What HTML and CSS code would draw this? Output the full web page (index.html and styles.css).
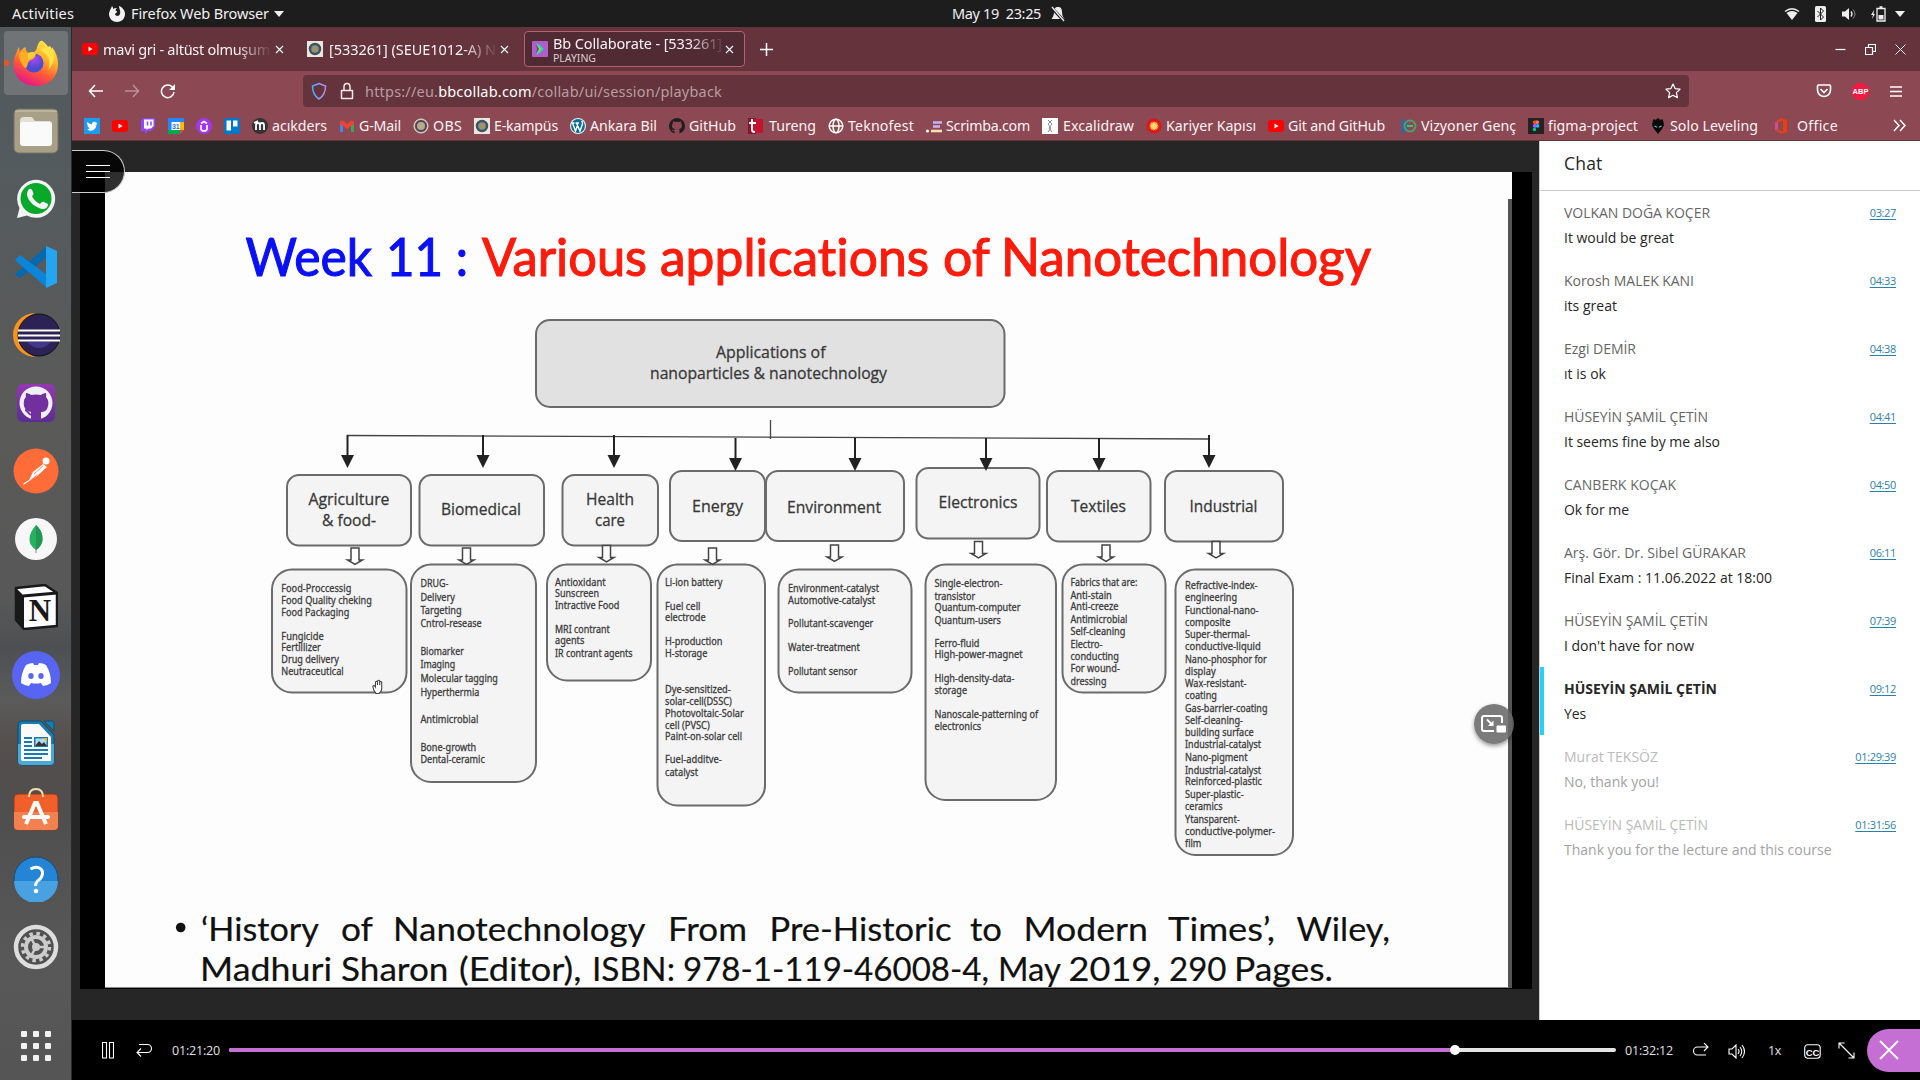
FILE: index.html
```html
<!DOCTYPE html>
<html lang="en">
<head>
<meta charset="utf-8">
<title>Bb Collaborate</title>
<link rel="stylesheet" href="styles.css">
</head>
<body>
<div class="desktop">
  <header class="topbar">
    <div class="topbar-left">
      <span class="activities" data-w="62">Activities</span>
      <svg class="app-glyph" width="16" height="18" viewBox="0 0 16 18"><path d="M3 1c1 1 1 2 1 3 1-1 3-1 4-1-1 1-2 2-1 3 1 0 1 0 1 1s-2 1-2 2c0 2 4 3 5 0 1-3-1-5-1-8 3 1 6 4 6 8 0 5-4 8-8 8s-8-3-8-8c0-3 2-5 3-8z" fill="#f2f2f2"/></svg>
      <span data-w="138">Firefox Web Browser</span>
      <i class="caret"></i>
    </div>
    <div class="clock">
      <span data-w="89">May 19&nbsp; 23:25</span>
      <svg width="14" height="16" viewBox="0 0 14 16"><path d="M7 1c3 0 4 2 4 5s1 5 2.500 7H.5C2 11 3 9 3 6s1-5 4-5z" fill="#eee"/><path d="M0 1l13 14" stroke="#1d1d1d" stroke-width="3"/><path d="M1 1l12 14" stroke="#eee" stroke-width="1.300"/></svg>
    </div>
    <div class="tray">
      <svg width="16" height="14" viewBox="0 0 16 14"><path d="M8 13L2.500 6q5.500-4 11 0z" fill="#eee"/><path d="M1 4.500Q8-1 15 4.500" fill="none" stroke="#eee" stroke-width="1.400"/></svg>
      <svg class="bt" width="12" height="16" viewBox="0 0 12 16"><rect width="11" height="16" rx="1.500" fill="#eee"/><path d="M2.500 5l6 6-3 3V2l3 3-6 6" fill="none" stroke="#1d1d1d"/></svg>
      <svg class="vol" width="16" height="14" viewBox="0 0 16 14"><path d="M1 4.500h3L8 1v12L4 9.500H1z" fill="#eee"/><path d="M10 4.500q2 2.500 0 5" fill="none" stroke="#eee" stroke-width="1.300"/><path d="M12 2.500q4 4.500 0 9" fill="none" stroke="#888"/></svg>
      <svg class="bat" width="15" height="16" viewBox="0 0 15 16"><path d="M3 4L0 9h2l-1 4 3-5H2.500z" fill="#eee"/><path d="M6 2.500h8v12.500H6zM8.500 1h3" fill="none" stroke="#eee" stroke-width="1.300"/><path d="M7.500 9h5v4.500h-5z" fill="#eee"/></svg>
      <i class="caret"></i>
    </div>
  </header>

  <div class="workspace">
    <nav class="dock">
      <div class="dock-item active">
        <svg width="48" height="60" viewBox="0 0 48 60"><defs>
          <linearGradient id="fx" x1=".8" y1="0" x2=".3" y2="1"><stop offset="0" stop-color="#fff44f"/><stop offset=".35" stop-color="#ffb52a"/><stop offset=".65" stop-color="#ff5a36"/><stop offset="1" stop-color="#e3128d"/></linearGradient>
          <radialGradient id="fg" cx=".5" cy=".3"><stop offset="0" stop-color="#b245f0"/><stop offset="1" stop-color="#4a4ccf"/></radialGradient></defs>
          <path d="M29 7c5 3 8 7 9 11 2-1 2-3 2-4 4 5 6 11 6 17 0 13-9 22-22 22S1.500 44 1.500 31c0-7 3-11 5-17 1 2 1 3 1 5 3-3 4-4 6-5 0 3 1 5 3 6 4 0 7-1 8-4 1-4 2-7 5-9z" fill="url(#fx)"/>
          <circle cx="22" cy="30" r="9.500" fill="url(#fg)"/><path d="M7 21c4-4 8-1 12 0 4 0 5 1 4 3-2 3-6 3-7 6-1 3-1 5-3 5-3-3-6-8-6-14z" fill="#ffad24"/><path d="M16 20c4-2 7-1 8 1-1 3-6 4-8 6z" fill="#ffcf3a"/><path d="M28 17c8 3 12 11 8 20 7-7 8-16 2-24z" fill="#ffe247"/></svg>
        <i class="run-dot"></i>
      </div>
      <div class="dock-item"><svg width="46" height="46" viewBox="0 0 46 46"><rect x="1" y="1" width="44" height="44" rx="5" fill="#a79f86" stroke="#797362"/><path d="M2 3h42" stroke="#cfc8b4"/><path d="M7 13q0-4 4-4h7q2 0 3 3l1 1h14q3 0 3 3v6H7z" fill="#e3e0d6"/><rect x="7" y="14" width="32" height="24" rx="3" fill="#fafafa"/></svg></div>
      <div class="dock-item"><svg width="40" height="40" viewBox="0 0 40 40"><path d="M1 39l2.500-10A19 19 0 1 1 11 36.500z" fill="#f4f4f4"/><circle cx="20" cy="19.500" r="15.500" fill="#08a82b"/><path d="M13 10c2-1 3 0 4 3s0 3-1 4c2 4 4 6 8 8 1-1 2-3 4-2l4 2c0 5-5 6-9 4-7-3-11-8-12-13 0-3 1-5 2-6z" fill="#f4f4f4"/></svg></div>
      <div class="dock-item"><svg width="44" height="44" viewBox="0 0 44 44"><path d="M1 29l5 4L33 12V1z" fill="#0469ad"/><path d="M1 15l5-5 27 20v13z" fill="#0b85d8"/><path d="M32 1l11 5v32l-11 5z" fill="#25a5f0"/></svg></div>
      <div class="dock-item"><svg width="48" height="44" viewBox="0 0 48 44"><path d="M23 0A22 22 0 0 0 23 44a24 24 0 0 1 0-44z" fill="#f7941e"/><circle cx="27" cy="22" r="21" fill="#2c2255" stroke="#111"/><path d="M15 29q12 12 24 0z" fill="#43368e"/><path d="M6 17.500h42M6 22.500h42M6 27.500h42" stroke="#fff" stroke-width="2.200"/></svg></div>
      <div class="dock-item"><svg width="40" height="40" viewBox="0 0 40 40"><defs><linearGradient id="gh" x2="0" y2="1"><stop stop-color="#9636b5"/><stop offset="1" stop-color="#5b2d91"/></linearGradient></defs><rect x="1" y="1" width="38" height="38" rx="6" fill="url(#gh)"/><circle cx="20" cy="20" r="16.500" fill="#eef0f5"/><path d="M15 37v-8c-6-1-8-6-7-11 0-2 1-3 2-4-.500-2 0-4 0-4 2 0 4 1 5 2q5-1 10 0c1-1 3-2 5-2 0 0 .500 2 0 4 3 3 3 8 1 12-1 2-3 3-6 3v8z" fill="#71309d"/><path d="M9 27c3 0 3 5 7 5" fill="none" stroke="#71309d" stroke-width="2"/></svg></div>
      <div class="dock-item"><svg width="46" height="46" viewBox="0 0 46 46"><circle cx="23" cy="23" r="22.500" fill="#ff6c37"/><circle cx="33" cy="13" r="3.500" fill="#fff"/><path d="M30 16l4 3-12 11 3-4-10 8-5 3 1-2 5-3 4-8-2 1z" fill="#fff"/><path d="M19 24l9-7M21 26l9-8" stroke="#ff6c37" stroke-width=".8"/></svg></div>
      <div class="dock-item"><svg width="42" height="42" viewBox="0 0 42 42"><circle cx="21" cy="21" r="21" fill="#f7f7f7"/><path d="M21 7c5 5 6.500 9 6.500 14S24 30 21 32c-4-3-6.500-6-6.500-11S17 12 21 7z" fill="#27b060"/><path d="M21 7c5 5 6.500 9 6.500 14S24 30 21 32z" fill="#219650"/><path d="M21 31v4" stroke="#888"/></svg></div>
      <div class="dock-item"><svg width="44" height="46" viewBox="0 0 44 46"><path d="M2 4l29-3 12 8v33l-33 3-8-9z" fill="#fff" stroke="#191919" stroke-width="2.500" stroke-linejoin="round"/><path d="M2 4l8 8v33l-8-9z" fill="#191919"/><path d="M9 12l34-3" stroke="#191919" stroke-width="3"/><text x="26" y="37" text-anchor="middle" class="serif-n">N</text></svg></div>
      <div class="dock-item"><svg width="48" height="48" viewBox="0 0 48 48"><circle cx="24" cy="24" r="24" fill="#5865f2"/><path d="M14 14q4-2 7-2l1 2h4l1-2q4 0 7 2 5 8 5 18-4 3-8 3l-2-3q-5 1-10 0l-2 3q-4 0-8-3 0-10 5-18z" fill="#fff"/><ellipse cx="19" cy="25" rx="2.700" ry="3" fill="#5865f2"/><ellipse cx="29" cy="25" rx="2.700" ry="3" fill="#5865f2"/></svg></div>
      <div class="dock-item"><svg width="38" height="46" viewBox="0 0 38 46"><path d="M5 1h19l13 14v26q0 4-4 4H5q-4 0-4-4V5q0-4 4-4z" fill="#1a7bb0" stroke="#0e4f74"/><path d="M1 24h36v17q0 4-4 4H5q-4 0-4-4z" fill="#4aa9d6"/><path d="M6 4h16l12 13v24H6q-2 0-2-2V6q0-2 2-2z" fill="#fafafa"/><path d="M27 1h8q2 0 2 2v8z" fill="#1a7bb0" stroke="#0e4f74"/><path d="M7 18h8M7 22h8M7 26h8M7 30h24M7 34h24M7 38h18" stroke="#1a7bb0" stroke-width="2"/><rect x="17" y="17" width="14" height="10" fill="#1a7bb0"/><rect x="18.500" y="18.500" width="11" height="7" fill="#aedcf3"/><path d="M18 26l4-5 3 3 2-2 3 4z" fill="#333"/><path d="M26 18h4v4z" fill="#f7b32b"/></svg></div>
      <div class="dock-item"><svg class="lift" width="46" height="44" viewBox="0 0 46 44"><rect x="1" y="7" width="44" height="36" rx="4" fill="#f1602a" stroke="#8f3a1b"/><path d="M1 25h44v14q0 4-4 4H5q-4 0-4-4z" fill="#f2814f"/><path d="M16 10q0-8 7-8t7 8" fill="none" stroke="#f8dca8" stroke-width="2"/><path d="M13 37l9-21h2l9 21" fill="none" stroke="#fff" stroke-width="4"/><path d="M11 30h24" stroke="#fff" stroke-width="4" stroke-linecap="round"/></svg></div>
      <div class="dock-item"><svg width="46" height="46" viewBox="0 0 46 46"><circle cx="23" cy="23" r="22" fill="#2484d6" stroke="#1d4c76"/><path d="M1 25h44a22 22 0 0 1-44 0z" fill="#48a2e2"/><path d="M17.500 13q5-3 9-1 5 3 2 9-1 2-4 4-2 2-2 5" fill="none" stroke="#fff" stroke-width="3"/><circle cx="23" cy="35" r="2.300" fill="#fff"/></svg></div>
      <div class="dock-item"><svg width="46" height="46" viewBox="0 0 46 46"><circle cx="23" cy="23" r="20" fill="#515151" stroke="#dedede" stroke-width="4.500"/><circle cx="23" cy="23" r="13.500" fill="none" stroke="#ccc" stroke-width="3.500" stroke-dasharray="3.500 3.568"/><circle cx="23" cy="23" r="10" fill="none" stroke="#ccc" stroke-width="4"/><circle cx="23" cy="23" r="4" fill="#ccc"/><path d="M23 23l-5-9M23 23l-5 9M23 23h10" stroke="#ccc" stroke-width="2.500"/></svg></div>
      <div class="dock-apps"><i></i><i></i><i></i><i></i><i></i><i></i><i></i><i></i><i></i></div>
    </nav>

    <main class="browser">
      <div class="tabs">
        <div class="tab tab-one"><svg width="16" height="12" viewBox="0 0 16 12"><rect width="16" height="12" rx="2.500" fill="#f00"/><path d="M6.500 3.500l4 2.500-4 2.500z" fill="#fff"/></svg>
          <span class="tab-title fade" data-w="167">mavi gri - altüst olmuşum</span><svg class="x" width="9" height="9" viewBox="0 0 9 9"><path d="M1 1l7 7M8 1L1 8"/></svg></div>
        <div class="tab tab-two"><svg width="16" height="16" viewBox="0 0 16 16"><path d="M0 0h16v16H0z" fill="#eee8dc"/><circle cx="8" cy="8" r="5" fill="#9c9270" stroke="#38536b" stroke-width="2.500"/></svg>
          <span class="tab-title fade" data-w="167">[533261] (SEUE1012-A) N</span><svg class="x" width="9" height="9" viewBox="0 0 9 9"><path d="M1 1l7 7M8 1L1 8"/></svg></div>
        <div class="tab tab-active"><svg width="16" height="16" viewBox="0 0 16 16"><rect width="16" height="16" rx="1" fill="#b25cc9"/><path d="M4 2l4 2 4 4-4 4-4 2 3-6z" fill="#1fd3c4"/><path d="M4 3l6 5-6 5 3-5z" fill="#8be02f"/><path d="M4 3l3 5-3 5 1-5z" fill="#6b3db0"/></svg>
          <div class="tab-two-lines"><span class="fade" data-w="169">Bb Collaborate - [533261]</span><small data-w="43">PLAYING</small></div><svg class="x" width="9" height="9" viewBox="0 0 9 9"><path d="M1 1l7 7M8 1L1 8"/></svg></div>
        <svg class="new-tab" width="13" height="13" viewBox="0 0 13 13"><path d="M6.500 0v13M0 6.500h13"/></svg>
        <div class="win-buttons">
          <svg width="11" height="11" viewBox="0 0 11 11"><path d="M.5 5.500h10"/></svg>
          <svg width="11" height="11" viewBox="0 0 11 11"><path d="M.5 3.500h7v7h-7zM3.500 3V.5h7v7H8"/></svg>
          <svg width="11" height="11" viewBox="0 0 11 11"><path d="M.5.5l10 10M10.500.5l-10 10" stroke-width=".9"/></svg>
        </div>
      </div>

      <div class="toolbar">
        <div class="nav-buttons">
          <svg width="16" height="16" viewBox="0 0 16 16"><path d="M15 8H1.500M7 2L1.500 8 7 14"/></svg>
          <svg class="dim" width="16" height="16" viewBox="0 0 16 16"><path d="M1 8h13.500M9 2l5.500 6L9 14"/></svg>
          <svg width="16" height="16" viewBox="0 0 16 16"><path d="M14 9A6.300 6.300 0 1 1 12.500 4.200L14.500 6"/><path d="M15 1v6H9z" fill="#fff" stroke="none"/></svg>
        </div>
        <div class="urlbar">
          <svg width="16" height="18" viewBox="0 0 16 18"><defs><linearGradient id="sh" x2="1" y2="0"><stop stop-color="#3fb4ff"/><stop offset="1" stop-color="#b98cf0"/></linearGradient></defs><path d="M8 1.500L14.500 4q0 9-6.500 13Q1.500 13 1.500 4z" fill="none" stroke="url(#sh)" stroke-width="1.500"/></svg>
          <svg width="14" height="18" viewBox="0 0 14 18"><path d="M1.500 8.500h11v8h-11zM4 8V5a3 3.500 0 0 1 6 0v3" fill="none" stroke="#f2e9ea" stroke-width="1.500" stroke-linejoin="round"/></svg>
          <span class="url" data-w="357">https://eu.<b>bbcollab.com</b>/collab/ui/session/playback</span>
          <svg class="star" width="16" height="16" viewBox="0 0 16 16"><path d="M8 1l2.100 4.600 4.900.6-3.600 3.400 1 5L8 12.200 3.600 14.600l1-5L1 6.200l4.900-.6z" fill="none" stroke="#fff" stroke-width="1.200" stroke-linejoin="round"/></svg>
        </div>
        <div class="toolbar-right">
          <svg width="16" height="14" viewBox="0 0 16 14"><path d="M2.500 1h11q1 0 1 1v4a6.500 6.500 0 0 1-13 0V2q0-1 1-1zM4.500 5L8 8.500 11.500 5"/></svg>
          <svg width="17" height="17" viewBox="0 0 17 17"><path d="M5 0h7l5 5v7l-5 5H5l-5-5V5z" fill="#f01b45" stroke="none"/><text x="8.500" y="11.400" text-anchor="middle" class="abp">ABP</text></svg>
          <svg class="burger" width="12" height="11" viewBox="0 0 12 11"><path d="M0 1h12M0 5.500h12M0 10h12"/></svg>
        </div>
      </div>

      <div class="bookmarks">
        <a><svg width="16" height="16" viewBox="0 0 16 16"><path d="M0 0h16v16H0z" fill="#1d9bf0"/><path d="M3 11.500c5 3 9.500 0 9.500-5.500l1-1.300-1.300.1c-1.500-2-4.500-1-4.200 1.400C6 6 4.500 5.200 3.500 4c-1 2 0 3 1 3.800l-1-.3c0 1.300 1 2.200 2 2.400-.5 1-1.500 1.500-2.500 1.600z" fill="#fff"/></svg></a>
        <a><svg width="16" height="16" viewBox="0 0 16 16"><rect y="2" width="16" height="12" rx="3" fill="#f00"/><path d="M6.500 5.500l4 2.500-4 2.500z" fill="#fff"/></svg></a>
        <a><svg width="16" height="16" viewBox="0 0 16 16"><path d="M3 0h12v9l-4 4H8l-3 3v-3H1V3z" fill="#9146ff"/><path d="M4 1.500h9.500V8l-2.500 2.500H8.500L6.500 12v-1.500H4z" fill="#fff"/><path d="M7.500 3.500v4M11 3.500v4" stroke="#9146ff" stroke-width="1.500"/></svg></a>
        <a><svg width="16" height="16" viewBox="0 0 16 16"><path d="M0 1q0-1 1-1h14q1 0 1 1v11l-4 4H1q-1 0-1-1z" fill="#2684fc"/><path d="M12 4h4v8h-4z" fill="#ffba00"/><path d="M0 12h12v4H1q-1 0-1-1z" fill="#00ac47"/><path d="M12 12h4l-4 4z" fill="#ea4335"/><path d="M3.500 4H12v8H3.500z" fill="#fff"/><text x="7.800" y="11" text-anchor="middle" class="cal">31</text></svg></a>
        <a><svg width="16" height="16" viewBox="0 0 16 16"><circle cx="8" cy="8" r="8" fill="#a435f0"/><path d="M5 7v3.500q0 2.500 3 2.500t3-2.500V7M5 5.500L8 3.500l3 2" fill="none" stroke="#fff" stroke-width="1.700"/></svg></a>
        <a><svg width="16" height="16" viewBox="0 0 16 16"><rect width="16" height="16" rx="2" fill="#0079c8"/><path d="M2.500 2.500h4.500v10H2.500zM9 2.500h4.500v6H9z" fill="#fff"/></svg></a>
        <a><svg width="16" height="16" viewBox="0 0 16 16"><circle cx="8" cy="8" r="8" fill="#333"/><path d="M4 12V7q0-2 2-2t2 2v5M8 7q0-2 2-2t2 2v5M2 5l4-2" fill="none" stroke="#fff" stroke-width="1.800"/></svg><span data-w="55">acıkders</span></a>
        <a><svg width="16" height="16" viewBox="0 0 16 16"><path d="M1 14V4h3v10z" fill="#4285f4"/><path d="M12 14V4h3v10z" fill="#34a853"/><path d="M1 3l3-.5L8 6l4-3.500 3 .5v3l-7 5-7-5z" fill="#ea4335"/></svg><span data-w="42">G-Mail</span></a>
        <a><svg width="16" height="16" viewBox="0 0 16 16"><circle cx="8" cy="8" r="7" fill="#b9a987" stroke="#e5dccb"/><circle cx="8" cy="8" r="5" fill="none" stroke="#4d4463" stroke-width="2"/></svg><span data-w="29">OBS</span></a>
        <a><svg width="16" height="16" viewBox="0 0 16 16"><path d="M0 0h16v16H0z" fill="#eee8dc"/><circle cx="8" cy="8" r="5" fill="#9c9270" stroke="#38536b" stroke-width="2.500"/></svg><span data-w="64">E-kampüs</span></a>
        <a><svg width="16" height="16" viewBox="0 0 16 16"><circle cx="8" cy="8" r="8" fill="#e8f2f7"/><circle cx="8" cy="8" r="6.900" fill="#0d6c96"/><path d="M2.500 5l3 8 2.300-6.500M6.500 5l3.500 8 2.500-7q.3-2-1-3M1.500 5h3M5.500 5h3.500" fill="none" stroke="#fff" stroke-width="1.400"/></svg><span data-w="67">Ankara Bil</span></a>
        <a><svg width="16" height="16" viewBox="0 0 16 16"><path d="M8 0a8 8 0 0 0-2.500 15.600V13c-2 .5-2.600-1-3-1.700 1.200-.3 1.400 1.500 3 .8l.4-1C3.500 10.700 3 9 3 7.500q0-1.500 1-2.300-.3-1 .1-2 1 0 2 .8 2-.5 4 0 1-.8 2-.8.4 1 .1 2 .8.900.800 2.300c0 2-1 3.300-3 3.600q.5.500.5 1.500v3A8 8 0 0 0 8 0z" fill="#221d22"/></svg><span data-w="47">GitHub</span></a>
        <a><svg width="16" height="16" viewBox="0 0 16 16"><path d="M0 0h8v16H0z" fill="#8f1228"/><path d="M6 1h9v14H4z" fill="#c4122f"/><path d="M4 1v11q0 2 3 2M1 5h7" fill="none" stroke="#fff" stroke-width="2"/></svg><span data-w="47" class="pad1">Tureng</span></a>
        <a><svg width="16" height="16" viewBox="0 0 16 16"><g fill="none" stroke="#fff" stroke-width="1.500"><circle cx="8" cy="8" r="6.800"/><ellipse cx="8" cy="8" rx="3" ry="6.800"/><path d="M1 8h14"/></g></svg><span data-w="66">Teknofest</span></a>
        <a><svg width="16" height="16" viewBox="0 0 16 16"><path d="M7 4.500h9M7 8.500h7" stroke="#c5b5f5" stroke-width="2.600"/><path d="M5 13h11" stroke="#f7dfae" stroke-width="2.600"/><circle cx="1.500" cy="13" r="1.500" fill="#fff"/></svg><span data-w="84">Scrimba.com</span></a>
        <a><svg width="16" height="16" viewBox="0 0 16 16"><path d="M0 0h16v16H0z" fill="#fff"/><path d="M6 2l4 4-3 4 3 4M10 2L6 6l3 4-3 4" fill="none" stroke="#888"/></svg><span data-w="71" class="pad1">Excalidraw</span></a>
        <a><svg width="16" height="16" viewBox="0 0 16 16"><circle cx="8" cy="8" r="7.500" fill="#e0131b"/><circle cx="8" cy="8" r="4" fill="#f8d36b" stroke="#d66a20" stroke-dasharray="1 1" stroke-width="2"/></svg><span data-w="90">Kariyer Kapısı</span></a>
        <a><svg width="16" height="16" viewBox="0 0 16 16"><rect y="2" width="16" height="12" rx="3" fill="#f00"/><path d="M6.500 5.500l4 2.500-4 2.500z" fill="#fff"/></svg><span data-w="97" class="wide">Git and GitHub</span></a>
        <a><svg width="16" height="16" viewBox="0 0 16 16"><path d="M1.500 2.500v11L8 8z" fill="none" stroke="#1d6fb5" stroke-width="2"/><circle cx="9" cy="8" r="5.500" fill="none" stroke="#4f9f6b" stroke-width="2"/><path d="M6 8h6" stroke="#58b85c" stroke-width="2"/></svg><span data-w="95">Vizyoner Genç</span></a>
        <a><svg width="16" height="16" viewBox="0 0 16 16"><path d="M0 0h16v16H0z" fill="#232323"/><path d="M8 2.500H6.500a1.800 1.800 0 0 0 0 3.600H8z" fill="#f24e1e"/><path d="M8 2.500h1.500a1.800 1.800 0 0 1 0 3.600H8z" fill="#ff7262"/><path d="M8 6.100H6.500a1.800 1.800 0 0 0 0 3.600H8z" fill="#a259ff"/><circle cx="9.600" cy="7.900" r="1.800" fill="#1abcfe"/><circle cx="6.500" cy="11.500" r="1.700" fill="#0acf83"/></svg><span data-w="90">figma-project</span></a>
        <a><svg width="16" height="16" viewBox="0 0 16 16"><path d="M3 2l1-1 1.500 1L8 0l2.500 2L12 1l1 1 1 5-2 4-4 5-4-5-2-4z" fill="#090909"/><path d="M4.500 8l2.500 1.200M11.500 8L9 9.200" stroke="#4cc" stroke-width="1.200"/></svg><span data-w="88" class="solo">Solo Leveling</span></a>
        <a><svg width="16" height="16" viewBox="0 0 16 16"><path d="M2 4l6-4v3L5 5v6l3 2v3l-6-4z" fill="#d1453b"/><path d="M2 4l3 1v6l-3 1z" fill="#d84a8a"/><path d="M8 0l6 2v12l-6 2v-3h2V3H8z" fill="#ea3e0b"/></svg><span data-w="41" class="office">Office</span></a>
        <svg class="overflow" width="13" height="13" viewBox="0 0 13 13"><path d="M1 1l5 5.500L1 12M7 1l5 5.500L7 12"/></svg>
      </div>

      <div class="content">
        <section class="stage">
          <div class="video">
            <svg id="slide" class="slide" width="1407" height="816" viewBox="105 172 1407 816">
              <path d="M347 435.500L1209 439" class="bus"/>
              <path d="M770.500 420v19" class="bus"/>
              <path d="M1508 199h4v789h-4z" fill="#555"/>
              <path d="M105 987.500h1404" stroke="#888"/>
              <circle cx="180.700" cy="927.500" r="4.800" fill="#111"/>
              <g transform="translate(370.500 679)" fill="#fff" stroke="#444" stroke-width="1.100"><path d="M5 6V3q1.200-1.500 2 0V2q1.300-1.500 2.200 0v1q1.300-1 2 .3V9q0 4-3 5.500H5.500Q3 12 2.300 7.500 3.500 5.500 5 8zM7 3v3M9.200 3v3"/></g>
            </svg>
          </div>
          <div class="menu-tab"><i></i><i></i><i></i></div>
          <div class="pip"><svg width="26" height="18" viewBox="0 0 26 18"><path d="M13 16H3q-2 0-2-2V3q0-2 2-2h16q2 0 2 2v5" fill="none" stroke="#fff" stroke-width="2"/><path d="M6 4.500l5 5" stroke="#fff" stroke-width="1.800"/><path d="M12.500 5.500v5.500H7z" fill="#fff"/><rect x="15.500" y="10.500" width="9.500" height="7" rx="1" fill="#fff"/></svg></div>
        </section>
        <aside class="chat">
          <h2><span data-w="38.500">Chat</span></h2>
          <ul>
            <li><div><span data-w="146">VOLKAN DOĞA KOÇER</span><a>03:27</a></div><p data-w="110">It would be great</p></li>
            <li><div><span data-w="130">Korosh MALEK KANI</span><a>04:33</a></div><p data-w="53">its great</p></li>
            <li><div><span data-w="72">Ezgi DEMİR</span><a>04:38</a></div><p data-w="42">ıt is ok</p></li>
            <li><div><span data-w="144">HÜSEYİN ŞAMİL ÇETİN</span><a>04:41</a></div><p data-w="156">It seems fine by me also</p></li>
            <li><div><span data-w="112">CANBERK KOÇAK</span><a>04:50</a></div><p data-w="65">Ok for me</p></li>
            <li><div><span data-w="182">Arş. Gör. Dr. Sibel GÜRAKAR</span><a>06:11</a></div><p data-w="208">Final Exam : 11.06.2022 at 18:00</p></li>
            <li><div><span data-w="144">HÜSEYİN ŞAMİL ÇETİN</span><a>07:39</a></div><p data-w="130">I don't have for now</p></li>
            <li class="current"><div><span data-w="153">HÜSEYİN ŞAMİL ÇETİN</span><a>09:12</a></div><p data-w="22">Yes</p></li>
            <li class="later"><div><span data-w="94">Murat TEKSÖZ</span><a>01:29:39</a></div><p data-w="95">No, thank you!</p></li>
            <li class="later"><div><span data-w="144">HÜSEYİN ŞAMİL ÇETİN</span><a>01:31:56</a></div><p data-w="267.500">Thank you for the lecture and this course</p></li>
          </ul>
        </aside>
      </div>

      <footer class="player">
        <svg class="pause" width="12" height="17" viewBox="0 0 12 17"><path d="M.5.5h4v15.500h-4zM7.500.5h4v15.500h-4z"/></svg>
        <svg class="rewind" width="17" height="14" viewBox="0 0 17 14"><path d="M3 1.500h8.500a4 4 0 0 1 0 8H1M5 5.500l-4 4 4 4"/></svg>
        <span class="time" data-w="48">01:21:20</span>
        <div class="track"><i class="played"></i><i class="knob"></i></div>
        <span class="time" data-w="48">01:32:12</span>
        <div class="player-actions">
          <svg width="17" height="14" viewBox="0 0 17 14"><path d="M14 12H5.500a4 4 0 0 1 0-8H16M12 0l4 4-4 4"/></svg>
          <svg class="down" width="17" height="15" viewBox="0 0 17 15"><path d="M1 5h3l4-4v13l-4-4H1zM10 5q2 2.500 0 5M12 3q3.500 4.500 0 9M14 1q5 6.500 0 13"/></svg>
          <span data-w="13">1x</span>
          <svg class="down" width="17" height="15" viewBox="0 0 17 15"><rect x=".7" y=".7" width="15.500" height="13.500" rx="3"/><text x="8.500" y="11.500" text-anchor="middle" class="cc">CC</text></svg>
          <svg width="17" height="17" viewBox="0 0 17 17"><path d="M1 1l15 15M1 6.500V1h5.500M16 10.500V16h-5.500"/></svg>
        </div>
        <div class="leave"><svg width="22" height="22" viewBox="0 0 22 22"><path d="M2 2l18 18M20 2L2 20"/></svg></div>
      </footer>
    </main>
  </div>
</div>
<script src="app.js"></script>
</body>
</html>
```
FILE: styles.css
```css
* { box-sizing: border-box; }
body { margin: 0; background: #000; overflow: hidden; font-family: "Noto Sans", "Open Sans", sans-serif; }
svg { display: block; flex: none; }
i { display: block; }
[data-w] { white-space: pre; }
.desktop { width: 1920px; height: 1080px; display: flex; flex-direction: column; }

.topbar { height: 27px; flex: none; background: #1d1d1d; color: #f0f0f0; font-size: 14.5px; line-height: 27px; display: grid; grid-template-columns: 952px auto 1fr; align-items: center; }
.topbar-left { display: flex; align-items: center; padding-left: 12px; }
.app-glyph { margin: 0 6px 0 35px; }
.caret { border: 5px solid transparent; border-top: 6px solid #f0f0f0; border-bottom: 0; }
.topbar-left .caret { margin-left: 5px; }
.clock { display: flex; align-items: center; gap: 10px; }
.tray { display: flex; align-items: center; justify-content: flex-end; gap: 13px; padding-right: 15px; }
.tray .bt { margin-left: 2px; }
.tray .vol { margin-left: 1px; }
.tray .bat { margin-right: -4px; margin-left: 1px; }

.workspace { flex: 1; display: flex; min-height: 0; }
.dock { width: 72px; flex: none; background: linear-gradient(#52595d 0, #545b5e 12%, #5a5a59 35%, #585858 54%, #4d5052 59%, #5b5b5b 64%, #554f4d 68%, #4f4e4e 74%, #585858 88%, #555); border-right: 1px solid #2a2a2a; padding-top: 1px; display: flex; flex-direction: column; align-items: center; }
.dock-item { width: 64px; height: 68px; flex: none; display: flex; align-items: center; justify-content: center; }
.dock-item.active { height: 64px; margin: 3px 0 2px; background: #707477; border-radius: 4px; position: relative; }
.lift { margin-bottom: 4px; }
.run-dot { position: absolute; left: 0; top: 29px; width: 5px; height: 6px; border-radius: 3px; background: #e95420; }
.serif-n { font: bold 31px "Liberation Serif", serif; fill: #191919; }
.dock-apps { margin: 50px 0 0; display: grid; grid-template-columns: repeat(3, 6px); gap: 6px; }
.dock-apps i { height: 6px; background: #f2f2f2; border-radius: 1px; }

.browser { flex: 1; min-width: 0; display: flex; flex-direction: column; color: #fbf2f3; }
.browser svg { stroke-linecap: butt; }
.tabs { height: 44px; flex: none; background: #64333c; display: flex; align-items: center; font-size: 14.5px; }
.tab { display: flex; align-items: center; height: 36px; }
.tab .x { stroke: #fff; stroke-width: 1.1; fill: none; }
.tab-one { padding-left: 10px; width: 225px; }
.tab-two { padding-left: 10px; width: 227px; }
.tab-title { margin-left: 5px; margin-right: 6px; line-height: 20px; width: 166px; overflow: hidden; }
.tab-two .tab-title { width: 166px; margin-left: 6px; margin-right: 5px; }
.fade { -webkit-mask-image: linear-gradient(90deg, #000 80%, transparent 102%); mask-image: linear-gradient(90deg, #000 80%, transparent 102%); }
.tab-active { width: 221px; background: #502b33; border: 1px solid #b5616f; border-radius: 4px; padding-left: 7px; }
.tab-two-lines { width: 168px; margin: 0 4px 0 5px; padding: 0; display: flex; flex-direction: column; align-items: flex-start; }
.tab-two-lines span { line-height: 18px; }
.tab-two-lines small { font-size: 10.5px; line-height: 13px; color: #dccdd0; }
.new-tab { margin-left: 15px; stroke: #fff; stroke-width: 1.5; }
.win-buttons { margin-left: auto; display: flex; gap: 19px; padding-right: 14px; }
.win-buttons svg { fill: none; stroke: #fff; stroke-width: 1.2; }

.toolbar { height: 40px; flex: none; background: #8c4853; display: flex; align-items: center; }
.nav-buttons { display: flex; gap: 20px; width: 231px; padding-left: 16px; }
.nav-buttons svg { fill: none; stroke: #fff; stroke-width: 1.5; }
.nav-buttons .dim { opacity: .4; }
.urlbar { width: 1386px; height: 32px; background: #64333c; border-radius: 4px; display: flex; align-items: center; padding: 0 8px; }
.urlbar svg + svg { margin-left: 13px; }
.url { font-size: 14.5px; color: #b99da2; margin-left: 11px; }
.url b { font-weight: 400; color: #fff; }
.urlbar .star { margin-left: auto; }
.toolbar-right { flex: 1; display: flex; align-items: center; justify-content: flex-end; gap: 20px; padding-right: 18px; }
.toolbar-right svg { fill: none; stroke: #fff; stroke-width: 1.6; }
.toolbar-right .burger { margin-left: 1px; }
.abp { font: bold 7.5px "Liberation Sans", sans-serif; fill: #fff; stroke: none; }

.bookmarks { height: 30px; flex: none; background: #8c4853; border-bottom: 1px solid #64333c; display: flex; align-items: center; padding: 0 14px 0 12px; gap: 12px; font-size: 14.2px; line-height: 20px; }
.bookmarks a { display: flex; align-items: center; gap: 4px; }
.pad1 { margin-left: 1px; }
.wide { margin-right: 4px; }
.office { margin-left: 4px; }
.solo { margin-right: 3px; }
.cal { font: bold 7px "Liberation Sans", sans-serif; fill: #1a73e8; }
.overflow { margin-left: auto; fill: none; stroke: #fff; stroke-width: 1.5; }

.content { flex: 1; min-height: 0; display: flex; }
.stage { width: 1467px; flex: none; background: #262626; padding: 31px 0 0 8px; position: relative; }
.video { width: 1452px; height: 817px; background: #000; padding-left: 25px; }
.slide { background: #fdfdfd; }
.bus { fill: none; stroke: #444; stroke-width: 1.3; }
.box { fill: #f4f4f4; stroke: #6b6b6b; stroke-width: 2; }
.root { fill: #e1e1e1; }
.label { font: 16.3px "Open Sans", "Noto Sans", sans-serif; fill: #383838; stroke: #383838; stroke-width: .3px; }
.item { font: 10.6px "Noto Sans", sans-serif; fill: #3c3c3c; stroke: #3c3c3c; stroke-width: .3px; }
.title { font: 51.5px Lato, sans-serif; stroke-width: 1.1px; }
.blue { fill: #0a10f5; stroke: #0a10f5; }
.red { fill: #fd1b0b; stroke: #fd1b0b; }
.cite { font: 32.5px Lato, sans-serif; fill: #111; stroke: #111; stroke-width: .2px; }
.slide text { font-variant-ligatures: none; font-feature-settings: "liga" 0, "dlig" 0, "clig" 0; }
.menu-tab { position: absolute; left: 0; top: 9px; width: 53px; height: 43px; background: rgba(0, 0, 0, .82); border: 1px solid #ccc; border-left: 0; border-radius: 0 22px 22px 0; padding: 14px 0 0 14px; display: flex; flex-direction: column; gap: 5px; }
.menu-tab i { width: 24px; height: 1px; background: #fff; }
.pip { position: absolute; left: 1402px; top: 563px; width: 40px; height: 40px; border-radius: 20px; background: rgba(105, 105, 105, .88); box-shadow: 0 2px 4px rgba(0, 0, 0, .4); display: flex; align-items: center; justify-content: center; }

.chat { flex: 1; background: #fff; color: #262626; border-left: 1px solid #ccc; font-family: "Open Sans", "Noto Sans", sans-serif; }
.chat h2 { margin: 0; height: 50px; border-bottom: 1px solid #ccc; padding: 10px 0 0 24px; font-size: 17.5px; font-weight: 400; line-height: 25px; }
.chat ul { list-style: none; margin: 0; padding: 0; }
.chat li { height: 68px; padding: 9px 24px 0 24px; font-size: 14px; line-height: 25px; }
.chat li div { display: flex; justify-content: space-between; color: #666; height: 25px; }
.chat li a { font-size: 11px; letter-spacing: -.35px; color: #2d7fab; text-decoration: underline; text-underline-offset: 2px; }
.chat p { margin: 0; display: inline-block; }
.chat .current { border-left: 4px solid #26d0fa; padding-left: 20px; }
.chat .current span { font-weight: 700; color: #262626; }
.chat .later span { color: #bbb; }
.chat .later p { color: #a2a2a2; }

.player { height: 60px; flex: none; background: #000; display: flex; align-items: center; color: #e2e2e2; font: 12.5px "Open Sans", "Noto Sans", sans-serif; padding-left: 30px; }
.player svg { fill: none; stroke: #fff; stroke-width: 1.1; }
.rewind { margin: 0 19px 0 22px; }
.time { width: 48px; flex: none; }
.track { width: 1387px; height: 4px; margin: 0 9px; border-radius: 2px; background: #e4e4e4; position: relative; flex: none; }
.played { width: 1226px; height: 4px; border-radius: 2px; background: #c56fd5; }
.knob { position: absolute; left: 1221px; top: -3px; width: 10px; height: 10px; border-radius: 5px; background: #fff; }
.player-actions { display: flex; align-items: center; gap: 19px; margin-left: 19px; }
.player-actions span { margin: 0 4px; }
.player-actions .down { margin-top: 3px; }
.player-actions svg:last-child { margin-left: -2px; }
.player .cc { font: bold 9.5px "Liberation Sans", sans-serif; fill: #fff; stroke: none; }
.leave { margin-left: auto; width: 53px; height: 43px; border-radius: 22px 0 0 22px; background: #c56fd5; display: flex; align-items: center; padding-left: 11px; }
.leave svg { stroke-width: 1.8; }
```
FILE: app.js
```js
// Track text so that it fills the width given in data-w.
document.querySelectorAll('[data-w]').forEach(function (el) {
  var range = document.createRange();
  range.selectNodeContents(el);
  var natural = range.getBoundingClientRect().width;
  el.style.letterSpacing = (el.dataset.w - natural) / el.textContent.length + 'px';
});

var slide = document.getElementById('slide');
function add(name, attrs, text) {
  var el = document.createElementNS('http://www.w3.org/2000/svg', name);
  for (var k in attrs) el.setAttribute(k, attrs[k]);
  if (text) el.textContent = text;
  slide.appendChild(el);
}
function label(cls, text, x, y, w) {
  add('text', { 'class': cls, x: x, y: y, textLength: w, lengthAdjust: 'spacingAndGlyphs' }, text);
}
function box(cls, x1, y1, x2, y2, r) {
  add('rect', { 'class': cls, x: x1, y: y1, width: x2 - x1, height: y2 - y1, rx: r });
}

// Title
label('title blue', 'Week', 245.5, 276, 126.5);
label('title blue', '11 :', 386, 276, 82);
label('title red', 'Various', 482, 276, 165);
label('title red', 'applications', 660, 276, 269);
label('title red', 'of', 943, 276, 47);
label('title red', 'Nanotechnology', 1001, 276, 370);

// Root and category boxes
box('box root', 536, 320, 1004.5, 407, 14);
label('label', 'Applications of', 716, 357.7, 109.5);
label('label', 'nanoparticles & nanotechnology', 650, 379, 237);
[[287, 475, 411, 545.5], [419.5, 475, 544, 545.5], [562.5, 475, 658, 545.5], [670, 471, 765, 541],
 [766, 471, 904, 541], [916.5, 468, 1039.5, 538.5], [1047, 471, 1150.5, 541.5], [1165, 471, 1283, 541.5]
].forEach(function (b) { box('box', b[0], b[1], b[2], b[3], 12); });
[['Agriculture', 308.5, 505, 81], ['& food-', 322, 526.3, 54], ['Biomedical', 441, 515, 80], ['Health', 586, 504.7, 48],
 ['care', 595, 526.3, 30], ['Energy', 692, 512, 51], ['Environment', 787, 512.7, 94], ['Electronics', 938.5, 508.3, 79],
 ['Textiles', 1071, 511.7, 55], ['Industrial', 1189.5, 511.7, 68]
].forEach(function (t) { label('label', t[0], t[1], t[2], t[3]); });

// Solid arrows down to each category
[[347.5, 435], [483, 435], [614, 435], [735.5, 438], [855, 438], [986, 438], [1099, 438], [1209, 435]].forEach(function (a) {
  add('path', { d: 'M' + a[0] + ' ' + a[1] + 'v22', stroke: '#222', 'stroke-width': 2 });
  add('path', { d: 'M' + (a[0] - 6.5) + ' ' + (a[1] + 20) + 'h13l-6.5 13z', fill: '#222' });
});

// Detail boxes: geometry, text left edge, then [text, baseline, width]
[
 [[272, 569.5, 406.5, 692.5], 281.3, [['Food-Proccessig', 592, 70], ['Food Quality cheking', 604.3, 90.6], ['Food Packaging', 616, 68], ['Fungicide', 639.7, 42.4], ['Fertillizer', 651, 39.6], ['Drug delivery', 662.7, 57.5], ['Neutraceutical', 675, 62.3]]],
 [[411, 564.5, 536, 782], 420.4, [['DRUG-', 587.4, 28], ['Delivery', 601, 34.4], ['Targeting', 614, 41.3], ['Cntrol-resease', 627.4, 61.3], ['Biomarker', 654.7, 43.4], ['Imaging', 668.4, 34.8], ['Molecular tagging', 682, 77.5], ['Hyperthermia', 695.7, 58.9], ['Antimicrobial', 723, 57.9], ['Bone-growth', 750.7, 55.8], ['Dental-ceramic', 763.4, 64.4]]],
 [[547, 564.5, 651, 680.5], 555, [['Antioxidant', 586, 50.6], ['Sunscreen', 597.4, 44], ['Intractive Food', 609, 64.4], ['MRI contrant', 633, 54.8], ['agents', 644.4, 29.3], ['IR contrant agents', 657, 77.5]]],
 [[657.5, 564.5, 765, 805.5], 665, [['Li-ion battery', 586, 57.5], ['Fuel cell', 610, 35.5], ['electrode', 621.4, 40.6], ['H-production', 645.4, 57.5], ['H-storage', 657, 42.4], ['Dye-sensitized-', 692.7, 65.8], ['solar-cell(DSSC)', 704.7, 66.8], ['Photovoltaic-Solar', 716.7, 78.9], ['cell (PVSC)', 728.7, 44.8], ['Paint-on-solar cell', 740.4, 77.1], ['Fuel-additve-', 763.4, 56.8], ['catalyst', 775.7, 33]]],
 [[778.5, 569.5, 911.5, 692.5], 788, [['Environment-catalyst', 592, 91], ['Automotive-catalyst', 604.3, 87], ['Pollutant-scavenger', 627.4, 85.4], ['Water-treatment', 651.4, 71.8], ['Pollutant sensor', 675.4, 69.3]]],
 [[925.5, 564.5, 1056, 800], 934.5, [['Single-electron-', 587.4, 68], ['transistor', 600, 40.7], ['Quantum-computer', 611.4, 86], ['Quantum-users', 624, 66.4], ['Ferro-fluid', 646.7, 45], ['High-power-magnet', 658.4, 88], ['High-density-data-', 682.4, 80], ['storage', 694, 32.5], ['Nanoscale-patterning of', 717.7, 103.6], ['electronics', 730.4, 46.8]]],
 [[1062.5, 564.5, 1165.5, 692.5], 1070.4, [['Fabrics that are:', 586.4, 67], ['Anti-stain', 598.7, 41.4], ['Anti-creeze', 610.4, 48], ['Antimicrobial', 622.7, 57], ['Self-cleaning', 635.4, 55], ['Electro-', 648, 32], ['conducting', 659.7, 48.6], ['For wound-', 672, 49.6], ['dressing', 684.7, 36]]],
 [[1175.5, 569.5, 1293, 855], 1185, [['Refractive-index-', 588.7, 72.5], ['engineering', 601.4, 52], ['Functional-nano-', 613.7, 73.6], ['composite', 626, 45.4], ['Super-thermal-', 637.7, 65], ['conductive-liquid', 650, 75.7], ['Nano-phosphor for', 662.7, 81.8], ['display', 675.4, 30.7], ['Wax-resistant-', 686.7, 61.4], ['coating', 699.4, 32], ['Gas-barrier-coating', 712, 82.5], ['Self-cleaning-', 724.4, 58], ['building surface', 736, 68.6], ['Industrial-catalyst', 748.4, 76], ['Nano-pigment', 761, 62.5], ['Industrial-catalyst', 773.7, 76], ['Reinforced-plastic', 785, 77], ['Super-plastic-', 797.7, 58.6], ['ceramics', 810.4, 37.5], ['Ytansparent-', 823, 54.6], ['conductive-polymer-', 835.4, 90], ['film', 847, 16.4]]]
].forEach(function (d) {
  box('box', d[0][0], d[0][1], d[0][2], d[0][3], 20);
  d[2].forEach(function (t) { label('item', t[0], d[1], t[1], t[2]); });
});

// Hollow arrows between a category and its details
[[355, 548], [466.5, 548], [606.5, 545.5], [712.5, 548], [834.5, 545], [978.5, 541.5], [1106, 545], [1216, 541.5]].forEach(function (a) {
  add('path', { d: 'M' + (a[0] - 4) + ' ' + a[1] + 'h8v12h3.500l-7.500 4.500l-7.500 -4.500h3.500z', fill: '#fff', stroke: '#444', 'stroke-width': 1.5 });
});

// The hand pointer stays above the box outline
slide.appendChild(slide.querySelector('g'));

// Citation
[['‘History', 201, 118], ['of', 341, 32], ['Nanotechnology', 393, 252.5], ['From', 668, 79], ['Pre-Historic', 769.5, 182],
 ['to', 970, 32], ['Modern', 1023.5, 124.5], ['Times’,', 1168, 107], ['Wiley,', 1296.5, 93.5]
].forEach(function (t) { label('cite', t[0], t[1], 940.7, t[2]); });
[['Madhuri', 200, 132], ['Sharon', 341, 107.5], ['(Editor),', 459, 122.5], ['ISBN:', 592, 83], ['978-1-119-46008-4,', 683, 306],
 ['May', 998, 63], ['2019,', 1068.5, 92], ['290', 1169, 57.5], ['Pages.', 1234, 99]
].forEach(function (t) { label('cite', t[0], t[1], 981.3, t[2]); });
```
